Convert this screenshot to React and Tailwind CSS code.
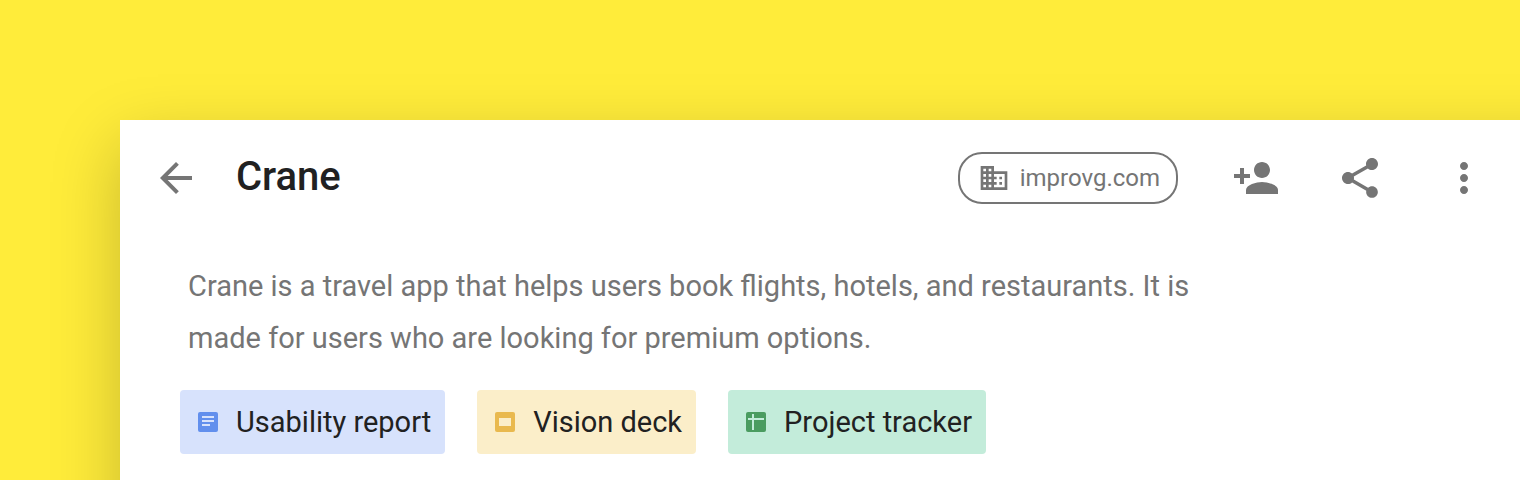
import { MdArrowBack, MdPersonAdd, MdShare, MdMoreVert, MdBusiness } from 'react-icons/md';

// Small glyphs shown at the start of each attachment chip
const DocIcon = () => (
    <svg viewBox="0 0 20 20" className="size-5 shrink-0" aria-hidden="true">
        <rect width="20" height="20" rx="2" fill="#628fed" />
        <path d="M4 5h12M4 9h12M4 13h8" stroke="#d7e2fc" strokeWidth="2" />
    </svg>
);

const SlidesIcon = () => (
    <svg viewBox="0 0 20 20" className="size-5 shrink-0" aria-hidden="true">
        <rect width="20" height="20" rx="2" fill="#e9b94e" />
        <rect x="4" y="6" width="12" height="8" fill="#fbeec9" />
    </svg>
);

const SheetIcon = () => (
    <svg viewBox="0 0 20 20" className="size-5 shrink-0" aria-hidden="true">
        <rect width="20" height="20" rx="2" fill="#4a9c60" />
        <path d="M2 7h16M7 2v16" stroke="#c3ecda" strokeWidth="2" />
    </svg>
);

const attachments = [
    { label: 'Usability report', color: 'bg-[#d7e2fc]', Icon: DocIcon },
    { label: 'Vision deck', color: 'bg-[#fbeec9]', Icon: SlidesIcon },
    { label: 'Project tracker', color: 'bg-[#c3ecda]', Icon: SheetIcon },
];

export default function App() {
    return (
        <div className="min-h-screen overflow-hidden bg-[#ffec3a] pt-[120px] pl-[120px] font-[Roboto,sans-serif]">
            {/* The sheet runs past the right edge so its shadow does not fade there */}
            <main className="-mr-24 -mb-24 min-h-screen bg-white pr-24 text-[#757575] shadow-[0_24px_64px_rgba(0,0,0,0.22)]">
                <header className="flex items-center px-8 pt-8">
                    <button type="button" aria-label="Back">
                        <MdArrowBack className="size-12" />
                    </button>
                    <h1 className="ml-9 pb-0.5 text-[40px] leading-[50px] font-medium text-[#212121]">Crane</h1>
                    <div className="ml-auto flex items-center">
                        <button type="button" className="flex h-[52px] items-center gap-2 rounded-3xl border-2 border-[#757575] pr-4 pl-[18px] text-2xl">
                            <MdBusiness className="mr-0.5 size-8" />
                            improvg.com
                        </button>
                        <button type="button" aria-label="Add person" className="ml-[54px]">
                            <MdPersonAdd className="size-12" />
                        </button>
                        <button type="button" aria-label="Share" className="ml-14">
                            <MdShare className="size-12" />
                        </button>
                        <button type="button" aria-label="More options" className="ml-14">
                            <MdMoreVert className="size-12" />
                        </button>
                    </div>
                </header>
                <p className="mt-14 ml-[68px] max-w-[1040px] text-[29px] leading-[52px]">
                    Crane is a travel app that helps users book flights, hotels, and restaurants. It is made for users who are looking for premium options.
                </p>
                <ul className="mt-[26px] ml-15 flex gap-8">
                    {attachments.map(({ label, color, Icon }) => (
                        <li key={label}>
                            <a href="#" className={`flex h-16 items-center gap-[18px] rounded-sm pr-3.5 pl-[18px] text-[29px] text-[#212121] ${color}`}>
                                <Icon />
                                <span className="pt-0.5">{label}</span>
                            </a>
                        </li>
                    ))}
                </ul>
            </main>
        </div>
    );
}
